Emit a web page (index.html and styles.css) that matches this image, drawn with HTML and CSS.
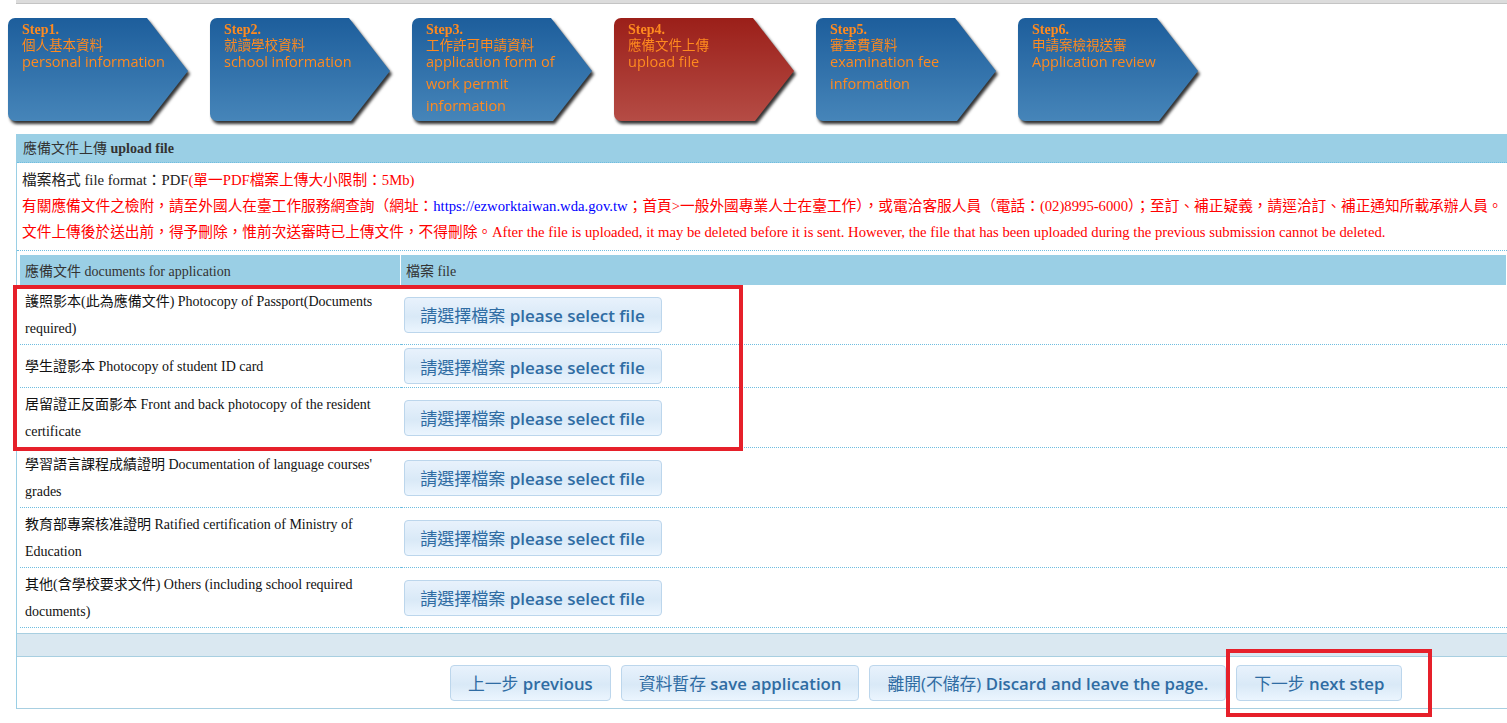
FILE: index.html
```html
<!DOCTYPE html>
<html lang="zh-Hant">
<head>
    <meta charset="UTF-8">
    <meta name="viewport" content="width=device-width, initial-scale=1.0">
    <title>應備文件上傳</title>
    <link rel="stylesheet" href="styles.css">
</head>
<body>
    <div class="topbar"></div>

    <!-- 步驟 -->
    <div class="steps">
        <div class="step">
            <div class="step-inner">
                <div class="step-no">Step1.</div>
                <div class="step-zh">個人基本資料</div>
                <div class="step-en">personal information</div>
            </div>
        </div>
        <div class="step">
            <div class="step-inner">
                <div class="step-no">Step2.</div>
                <div class="step-zh">就讀學校資料</div>
                <div class="step-en">school information</div>
            </div>
        </div>
        <div class="step">
            <div class="step-inner">
                <div class="step-no">Step3.</div>
                <div class="step-zh">工作許可申請資料</div>
                <div class="step-en">application form of work permit information</div>
            </div>
        </div>
        <div class="step active">
            <div class="step-inner">
                <div class="step-no">Step4.</div>
                <div class="step-zh">應備文件上傳</div>
                <div class="step-en">upload file</div>
            </div>
        </div>
        <div class="step">
            <div class="step-inner">
                <div class="step-no">Step5.</div>
                <div class="step-zh">審查費資料</div>
                <div class="step-en">examination fee information</div>
            </div>
        </div>
        <div class="step">
            <div class="step-inner">
                <div class="step-no">Step6.</div>
                <div class="step-zh">申請案檢視送審</div>
                <div class="step-en">Application review</div>
            </div>
        </div>
    </div>

    <div class="panel">
        <div class="panel-title"><span class="zh">應備文件上傳</span> upload file</div>

        <div class="notes">
            <div>檔案格式 file format：PDF<span class="red">(單一PDF檔案上傳大小限制：5Mb)</span></div>
            <div class="red">有關應備文件之檢附，請至外國人在臺工作服務網查詢（網址：<span class="blue">https://ezworktaiwan.wda.gov.tw</span>；首頁&gt;一般外國專業人士在臺工作），或電洽客服人員（電話：(02)8995-6000）；至訂、補正疑義，請逕洽訂、補正通知所載承辦人員。</div>
            <div class="red">文件上傳後於送出前，得予刪除，惟前次送審時已上傳文件，不得刪除。After the file is uploaded, it may be deleted before it is sent. However, the file that has been uploaded during the previous submission cannot be deleted.</div>
        </div>

        <table class="doc-table">
            <tr>
                <th class="col-doc">應備文件 documents for application</th>
                <th>檔案 file</th>
            </tr>
            <tr>
                <td>護照影本(此為應備文件) Photocopy of Passport(Documents required)</td>
                <td><button class="btn"><span class="zh">請選擇檔案</span> please select file</button></td>
            </tr>
            <tr>
                <td>學生證影本 Photocopy of student ID card</td>
                <td><button class="btn"><span class="zh">請選擇檔案</span> please select file</button></td>
            </tr>
            <tr>
                <td>居留證正反面影本 Front and back photocopy of the resident certificate</td>
                <td><button class="btn"><span class="zh">請選擇檔案</span> please select file</button></td>
            </tr>
            <tr>
                <td>學習語言課程成績證明 Documentation of language courses' grades</td>
                <td><button class="btn"><span class="zh">請選擇檔案</span> please select file</button></td>
            </tr>
            <tr>
                <td>教育部專案核准證明 Ratified certification of Ministry of Education</td>
                <td><button class="btn"><span class="zh">請選擇檔案</span> please select file</button></td>
            </tr>
            <tr>
                <td>其他(含學校要求文件) Others (including school required documents)</td>
                <td><button class="btn"><span class="zh">請選擇檔案</span> please select file</button></td>
            </tr>
        </table>

        <div class="panel-bar"></div>

        <div class="actions">
            <button class="btn"><span class="zh">上一步</span> previous</button>
            <button class="btn"><span class="zh">資料暫存</span> save application</button>
            <button class="btn"><span class="zh">離開(不儲存)</span> Discard and leave the page.</button>
            <button class="btn"><span class="zh">下一步</span> next step</button>
        </div>
    </div>

    <!-- 標示框 -->
    <div class="mark mark-rows"></div>
    <div class="mark mark-next"></div>
</body>
</html>
```

FILE: styles.css
```css
body {
    margin: 0;
    font-family: "Liberation Serif", "Noto Sans CJK TC", serif;
    font-size: 14.7px;
    color: #222;
    background-color: #fff;
    overflow: hidden;
}
.topbar {
    margin-left: 16px;
    height: 3px;
    background-color: #dcdcdc;
    border-bottom: 1px solid #c4c4c4;
}

/* 步驟 */
.steps {
    display: flex;
    gap: 22px;
    padding: 14px 0 0 8px;
}
.step {
    width: 180px;
    height: 103px;
    flex-shrink: 0;
    filter: drop-shadow(2px 3px 1.5px rgba(0,0,0,0.8));
}
.step-inner {
    height: 100%;
    box-sizing: border-box;
    padding: 4px 16px 0 14px;
    border-radius: 7px 0 0 7px;
    background: linear-gradient(#1d5e9c, #4685b9);
    clip-path: polygon(0 0, 139px 0, 180px 53px, 141px 103px, 0 103px);
    color: #ff8a1f;
}
.step.active .step-inner {
    background: linear-gradient(#9b1f19, #b54c45);
}
.step-no {
    font-family: "Liberation Serif", serif;
    font-weight: bold;
    font-size: 14px;
    line-height: 15px;
}
.step-zh {
    font-family: "Noto Sans CJK TC", sans-serif;
    font-size: 13.5px;
    line-height: 15px;
}
.step-en {
    font-family: "Comic Sans MS", "Open Sans", sans-serif;
    font-size: 14.5px;
    line-height: 22px;
    margin-top: -1px;
}

/* 區塊 */
.panel {
    margin: 13px 0 0 16px;
    border-left: 1px solid #9acfe5;
}
.panel-title {
    height: 26px;
    line-height: 26px;
    padding: 2px 0 0 6px;
    background-color: #9acfe5;
    font-weight: bold;
    font-size: 14px;
    color: #333;
    border-bottom: 1px dotted #6fbde0;
}
.panel-title .zh,
.btn .zh {
    font-weight: normal;
}
.notes {
    padding: 4px 5px 5px;
    line-height: 26px;
    white-space: nowrap;
    border-bottom: 1px dotted #6fbde0;
}
.red {
    color: #f00;
}
.blue {
    color: #0000ff;
}

/* 表格 */
.doc-table {
    margin: 4px 0 0 3px;
    width: calc(100% - 3px);
    border-collapse: collapse;
}
.doc-table th {
    height: 30px;
    padding: 0 5px;
    background-color: #9acfe5;
    border-right: 1px solid #fff;
    font-weight: normal;
    font-size: 14px;
    color: #333;
    text-align: left;
}
.doc-table .col-doc {
    width: 370px;
}
.doc-table td {
    padding: 3px 5px 2px 5px;
    line-height: 27px;
    font-size: 14px;
    color: #111;
    border-bottom: 1px dotted #6fbde0;
}
.doc-table td + td {
    padding: 3px;
}
.doc-table td .btn {
    display: block;
    width: 258px;
    height: 36px;
    padding: 0;
    font-size: 17px;
}

/* 按鈕 */
.btn {
    height: 36px;
    padding: 0 17px;
    font-family: "Open Sans", "Noto Sans CJK TC", sans-serif;
    font-size: 16.8px;
    font-weight: 600;
    white-space: nowrap;
    color: #2f6ca3;
    background: linear-gradient(#e8f2fc, #d9e9f7 55%, #ebf5fe);
    border: 1px solid #bcd6ec;
    border-radius: 4px;
    vertical-align: middle;
}

.panel-bar {
    margin-top: 5px;
    height: 22px;
    background-color: #dae8f1;
    border-top: 1px solid #a8cfe1;
    border-bottom: 1px solid #a8cfe1;
}
.actions {
    display: flex;
    gap: 10px;
    padding: 8px 0 7px 433px;
    border-bottom: 1px solid #a8cfe1;
}

/* 標示框 */
.mark {
    position: absolute;
    border: 4px solid #e6202a;
}
.mark-rows {
    left: 13px;
    top: 285px;
    width: 722px;
    height: 158px;
}
.mark-next {
    left: 1226px;
    top: 649px;
    width: 198px;
    height: 60px;
}
```
